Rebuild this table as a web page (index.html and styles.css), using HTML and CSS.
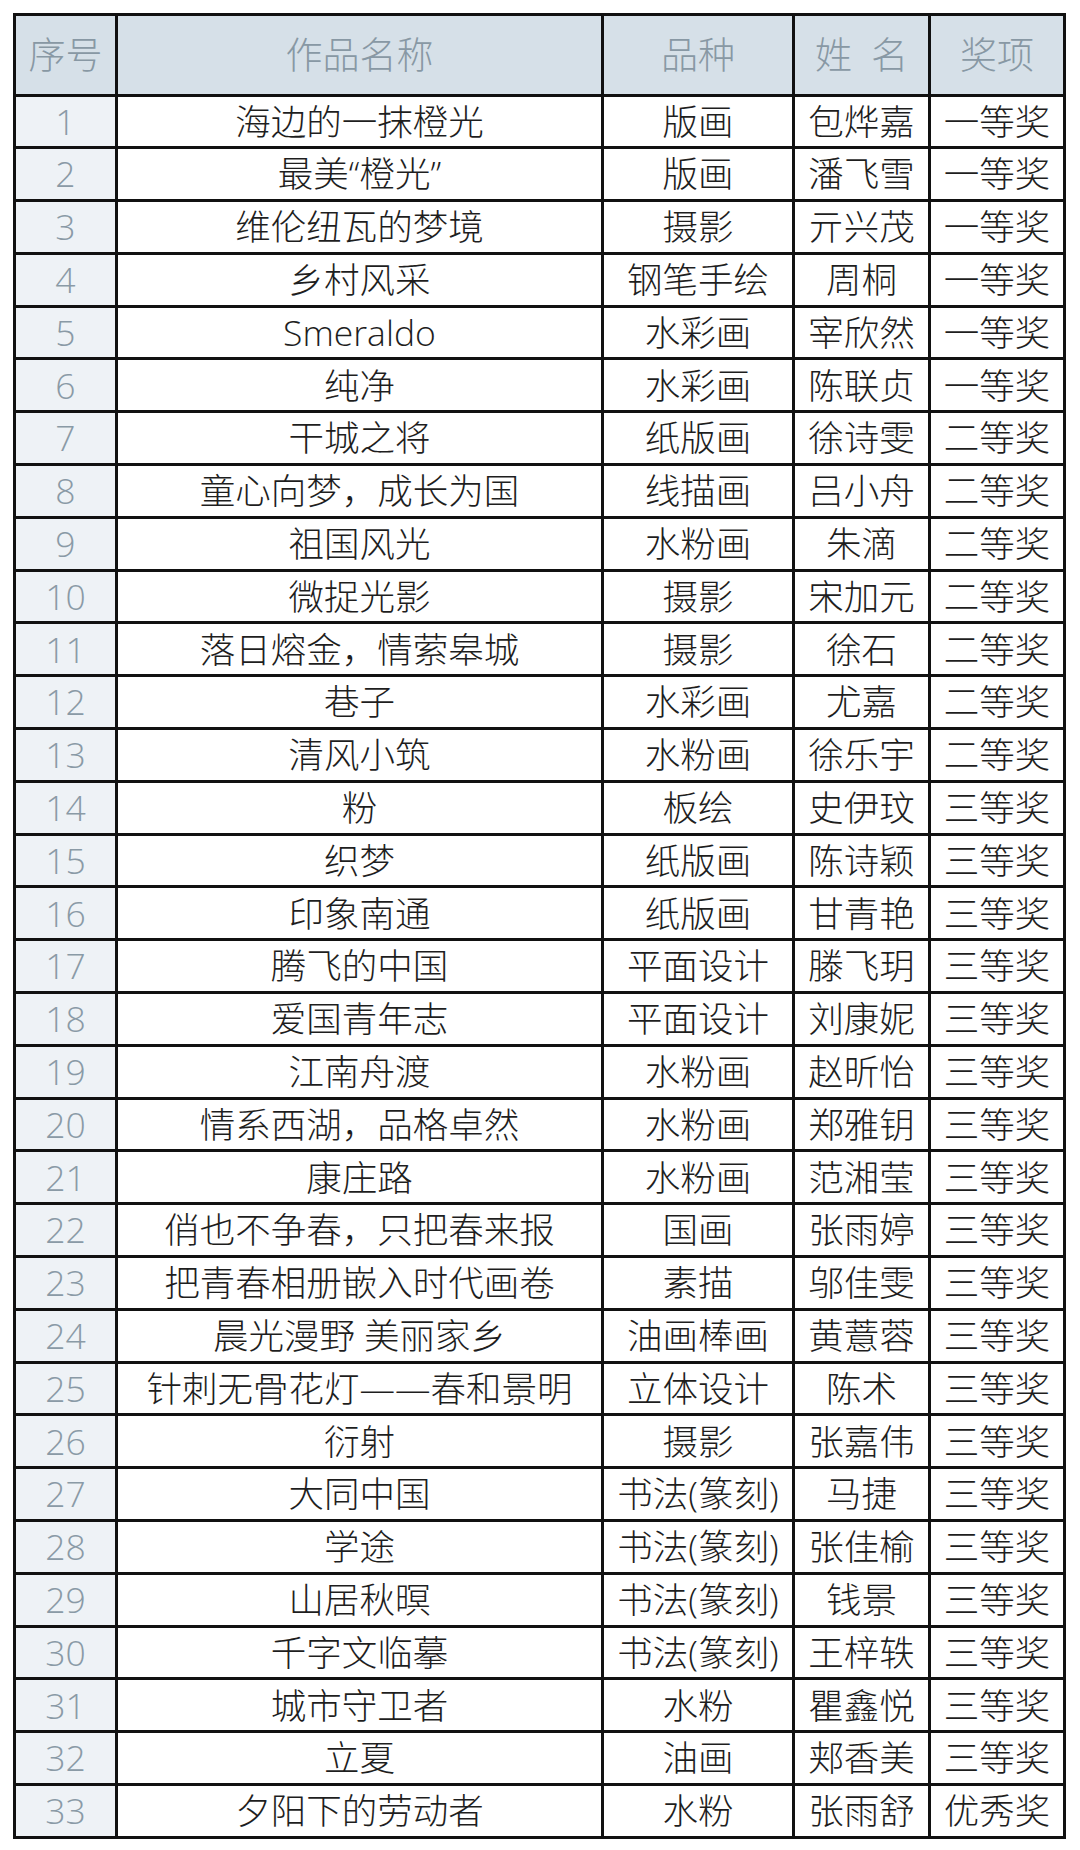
FILE: index.html
```html
<!DOCTYPE html>
<html lang="zh">
<head>
<meta charset="utf-8">
<title>获奖名单</title>
<link rel="stylesheet" href="styles.css">
</head>
<body>
<table class="awards">
<colgroup>
<col class="c-no"><col class="c-title"><col class="c-type"><col class="c-name"><col class="c-prize">
</colgroup>
<thead>
<tr><th>序号</th><th>作品名称</th><th>品种</th><th>姓&nbsp;&nbsp;名</th><th>奖项</th></tr>
</thead>
<tbody>
<tr><td class="no">1</td><td>海边的一抹橙光</td><td>版画</td><td>包烨嘉</td><td>一等奖</td></tr>
<tr><td class="no">2</td><td>最美“橙光”</td><td>版画</td><td>潘飞雪</td><td>一等奖</td></tr>
<tr><td class="no">3</td><td>维伦纽瓦的梦境</td><td>摄影</td><td>亓兴茂</td><td>一等奖</td></tr>
<tr><td class="no">4</td><td>乡村风采</td><td>钢笔手绘</td><td>周桐</td><td>一等奖</td></tr>
<tr><td class="no">5</td><td>Smeraldo</td><td>水彩画</td><td>宰欣然</td><td>一等奖</td></tr>
<tr><td class="no">6</td><td>纯净</td><td>水彩画</td><td>陈联贞</td><td>一等奖</td></tr>
<tr><td class="no">7</td><td>干城之将</td><td>纸版画</td><td>徐诗雯</td><td>二等奖</td></tr>
<tr><td class="no">8</td><td>童心向梦，成长为国</td><td>线描画</td><td>吕小舟</td><td>二等奖</td></tr>
<tr><td class="no">9</td><td>祖国风光</td><td>水粉画</td><td>朱滴</td><td>二等奖</td></tr>
<tr><td class="no">10</td><td>微捉光影</td><td>摄影</td><td>宋加元</td><td>二等奖</td></tr>
<tr><td class="no">11</td><td>落日熔金，情萦皋城</td><td>摄影</td><td>徐石</td><td>二等奖</td></tr>
<tr><td class="no">12</td><td>巷子</td><td>水彩画</td><td>尤嘉</td><td>二等奖</td></tr>
<tr><td class="no">13</td><td>清风小筑</td><td>水粉画</td><td>徐乐宇</td><td>二等奖</td></tr>
<tr><td class="no">14</td><td>粉</td><td>板绘</td><td>史伊玟</td><td>三等奖</td></tr>
<tr><td class="no">15</td><td>织梦</td><td>纸版画</td><td>陈诗颖</td><td>三等奖</td></tr>
<tr><td class="no">16</td><td>印象南通</td><td>纸版画</td><td>甘青艳</td><td>三等奖</td></tr>
<tr><td class="no">17</td><td>腾飞的中国</td><td>平面设计</td><td>滕飞玥</td><td>三等奖</td></tr>
<tr><td class="no">18</td><td>爱国青年志</td><td>平面设计</td><td>刘康妮</td><td>三等奖</td></tr>
<tr><td class="no">19</td><td>江南舟渡</td><td>水粉画</td><td>赵昕怡</td><td>三等奖</td></tr>
<tr><td class="no">20</td><td>情系西湖，品格卓然</td><td>水粉画</td><td>郑雅钥</td><td>三等奖</td></tr>
<tr><td class="no">21</td><td>康庄路</td><td>水粉画</td><td>范湘莹</td><td>三等奖</td></tr>
<tr><td class="no">22</td><td>俏也不争春，只把春来报</td><td>国画</td><td>张雨婷</td><td>三等奖</td></tr>
<tr><td class="no">23</td><td>把青春相册嵌入时代画卷</td><td>素描</td><td>邬佳雯</td><td>三等奖</td></tr>
<tr><td class="no">24</td><td>晨光漫野 美丽家乡</td><td>油画棒画</td><td>黄薏蓉</td><td>三等奖</td></tr>
<tr><td class="no">25</td><td>针刺无骨花灯——春和景明</td><td>立体设计</td><td>陈术</td><td>三等奖</td></tr>
<tr><td class="no">26</td><td>衍射</td><td>摄影</td><td>张嘉伟</td><td>三等奖</td></tr>
<tr><td class="no">27</td><td>大同中国</td><td>书法(篆刻)</td><td>马捷</td><td>三等奖</td></tr>
<tr><td class="no">28</td><td>学途</td><td>书法(篆刻)</td><td>张佳榆</td><td>三等奖</td></tr>
<tr><td class="no">29</td><td>山居秋暝</td><td>书法(篆刻)</td><td>钱景</td><td>三等奖</td></tr>
<tr><td class="no">30</td><td>千字文临摹</td><td>书法(篆刻)</td><td>王梓轶</td><td>三等奖</td></tr>
<tr><td class="no">31</td><td>城市守卫者</td><td>水粉</td><td>瞿鑫悦</td><td>三等奖</td></tr>
<tr><td class="no">32</td><td>立夏</td><td>油画</td><td>郏香美</td><td>三等奖</td></tr>
<tr><td class="no">33</td><td>夕阳下的劳动者</td><td>水粉</td><td>张雨舒</td><td>优秀奖</td></tr>
</tbody>
</table>
</body>
</html>
```

FILE: styles.css
```css
html, body {
  margin: 0;
  padding: 0;
  background: #ffffff;
}
body {
  padding: 13px 0 0 13px;
  font-family: "Open Sans", "Noto Sans CJK SC", sans-serif;
  font-weight: 300;
}
.awards {
  border-collapse: collapse;
  table-layout: fixed;
  width: 1053px;
}
.c-no { width: 102px; }
.c-title { width: 486px; }
.c-type { width: 191px; }
.c-name { width: 136px; }
.c-prize { width: 135px; }

.awards th,
.awards td {
  border: 3px solid #111111;
  padding: 0;
  text-align: center;
  vertical-align: middle;
  white-space: nowrap;
  overflow: hidden;
  font-size: 35.5px;
  line-height: 1;
}
.awards thead tr { height: 80.5px; }
.awards tbody tr { height: 52.8px; }
.awards th {
  background: #d6e0e8;
  color: #8898a4;
  font-weight: 300;
  font-size: 37px;
}
.awards td {
  color: #1e1e1e;
}
.awards td.no {
  background: #eef2f6;
  color: #8a9aa6;
}
```
